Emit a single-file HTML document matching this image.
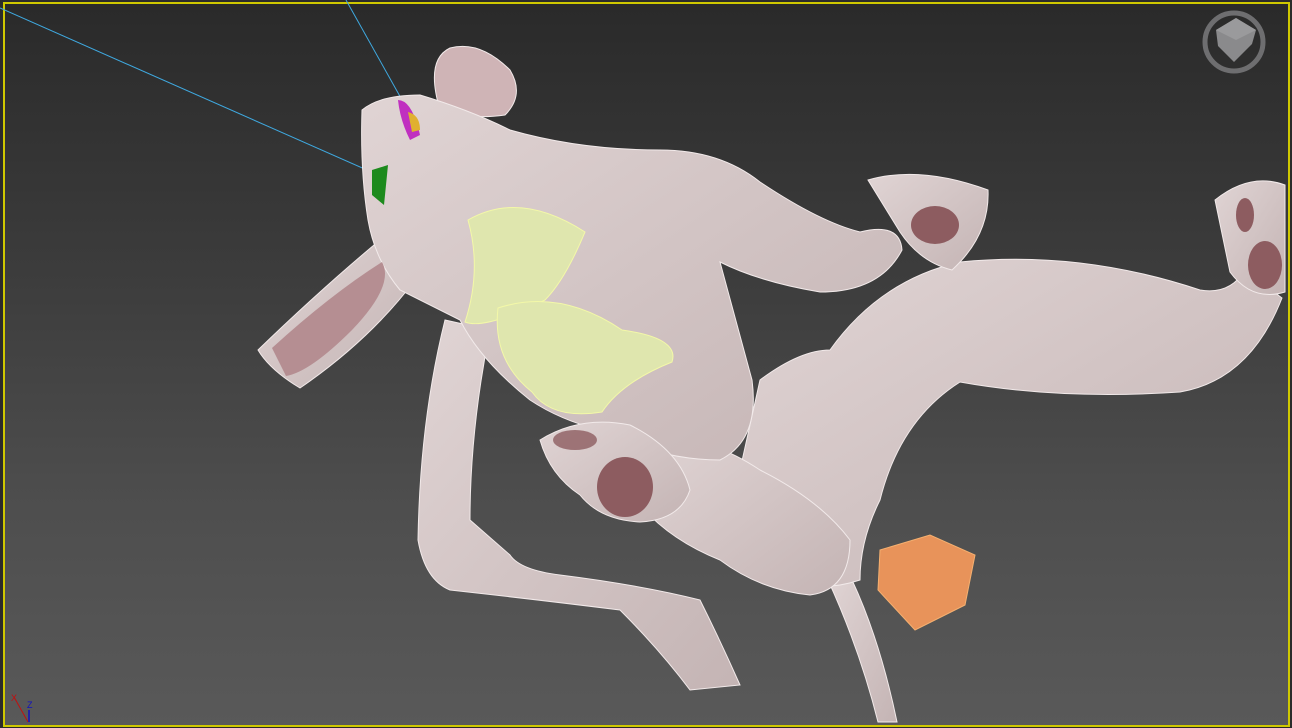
<!DOCTYPE html><html><head><style>
html,body{margin:0;padding:0;width:1292px;height:728px;overflow:hidden;background:#2b2b2b}
.vp{position:absolute;left:3px;top:2px;width:1283px;height:721px;border:2px solid #cfc800;background:linear-gradient(#2a2a2a 0%,#3b3b3b 35%,#4e4e4e 70%,#595959 100%)}
svg{position:absolute;left:0;top:0}
</style></head><body><div class="vp"></div>
<svg width="1292" height="728" viewBox="0 0 1292 728">
<defs><linearGradient id="sk" x1="0" y1="0" x2="1" y2="1"><stop offset="0" stop-color="#e0d4d4"/><stop offset="1" stop-color="#c4b4b4"/></linearGradient></defs>
<line x1="0" y1="8" x2="385" y2="178" stroke="#3fa9e0" stroke-width="1"/>
<line x1="346" y1="0" x2="402" y2="100" stroke="#3fa9e0" stroke-width="1"/>
<g fill="url(#sk)" stroke="#f2eaea" stroke-width="1">
<!-- top ear -->
<path d="M440 110 Q425 60 450 48 Q480 40 510 70 Q525 95 505 115 Q470 120 440 110Z" fill="#cfb4b6"/>
<!-- lower ear -->
<path d="M258 350 Q320 290 380 240 Q420 250 415 280 Q370 340 300 388 Q270 370 258 350Z"/>
<!-- tail -->
<path d="M828 580 Q860 650 878 722 L897 722 Q880 640 852 580Z"/>
<!-- arm lower left -->
<path d="M445 320 Q420 420 418 540 Q425 580 450 590 Q540 600 620 610 Q660 650 690 690 L740 685 Q720 640 700 600 Q640 585 560 575 Q520 570 510 555 L470 520 Q470 430 490 330Z"/>
<!-- big leg -->
<path d="M760 380 Q800 350 830 350 Q880 280 960 262 Q1080 250 1200 290 Q1230 295 1245 270 L1282 298 Q1250 380 1180 392 Q1060 400 960 382 Q900 420 880 500 Q860 540 860 580 Q830 590 800 585 Q760 530 740 470Z"/>
<!-- bent leg -->
<path d="M640 440 Q700 430 760 470 Q820 500 850 540 Q850 590 810 595 Q760 590 720 560 Q670 540 640 505Z"/>
<!-- torso + head -->
<path d="M362 110 Q380 95 420 95 Q470 110 510 130 Q580 150 660 150 Q720 150 760 182 Q820 222 860 232 Q900 222 902 250 Q880 292 820 292 Q760 282 720 262 L752 380 Q760 440 720 460 Q660 460 600 430 Q560 420 530 400 Q480 360 460 320 Q420 300 400 290 Q375 260 368 220 Q360 170 362 110Z"/>
<!-- right hand -->
<path d="M868 180 Q920 165 988 190 Q990 235 952 270 Q920 262 900 232Z"/>
<!-- right foot -->
<path d="M1215 200 Q1250 172 1285 185 L1285 292 Q1252 302 1230 272Z"/>
<!-- paw -->
<path d="M540 440 Q580 415 630 425 Q680 450 690 490 Q680 520 640 522 Q600 520 580 495 Q550 475 540 440Z"/>
</g>
<g fill="#8d5c60">
<path d="M272 348 Q330 295 382 262 Q395 285 352 330 Q310 372 286 376Z" fill="#b58e92"/>
<ellipse cx="625" cy="487" rx="28" ry="30"/>
<ellipse cx="935" cy="225" rx="24" ry="19"/>
<ellipse cx="1265" cy="265" rx="17" ry="24"/>
<ellipse cx="1245" cy="215" rx="9" ry="17"/>
<ellipse cx="575" cy="440" rx="22" ry="10" opacity=".8"/>
</g>
<g fill="#dfe6ae" stroke="#f3f8a8" stroke-width="1">
<path d="M468 220 Q520 190 585 232 Q565 280 545 300 Q485 330 465 322 Q482 270 468 220Z"/>
<path d="M498 308 Q560 288 622 330 Q680 338 672 362 Q622 382 602 412 Q552 420 532 392 Q492 360 498 308Z"/>
</g>
<path d="M880 550 L930 535 L975 555 L965 605 L915 630 L878 590Z" fill="#e8935a" stroke="#f5b070"/>
<path d="M372 170 L388 165 L384 205 L372 195Z" fill="#1d8a1d"/>
<path d="M398 100 Q412 100 420 135 L410 140 Q400 120 398 100Z" fill="#c030c0"/>
<path d="M408 112 Q420 115 420 130 L412 132Z" fill="#e0b030"/>
<g>
<circle cx="1234" cy="42" r="29" fill="none" stroke="#6e6e70" stroke-width="5"/>
<path d="M1216 30 L1236 18 L1256 30 L1252 44 L1234 62 L1218 46Z" fill="#8a8a8c"/>
<path d="M1216 30 L1236 18 L1256 30 L1236 40Z" fill="#9a9a9c"/>
</g>
<line x1="14" y1="697" x2="28" y2="722" stroke="#c01010" stroke-width="1"/>
<text x="11" y="701" font-family="Liberation Sans,sans-serif" font-size="9" fill="#c01010">X</text>
<line x1="29" y1="710" x2="29" y2="722" stroke="#1010c0" stroke-width="1.5"/>
<text x="27" y="708" font-family="Liberation Sans,sans-serif" font-size="9" fill="#1010c0">Z</text>
</svg>
</body></html>
